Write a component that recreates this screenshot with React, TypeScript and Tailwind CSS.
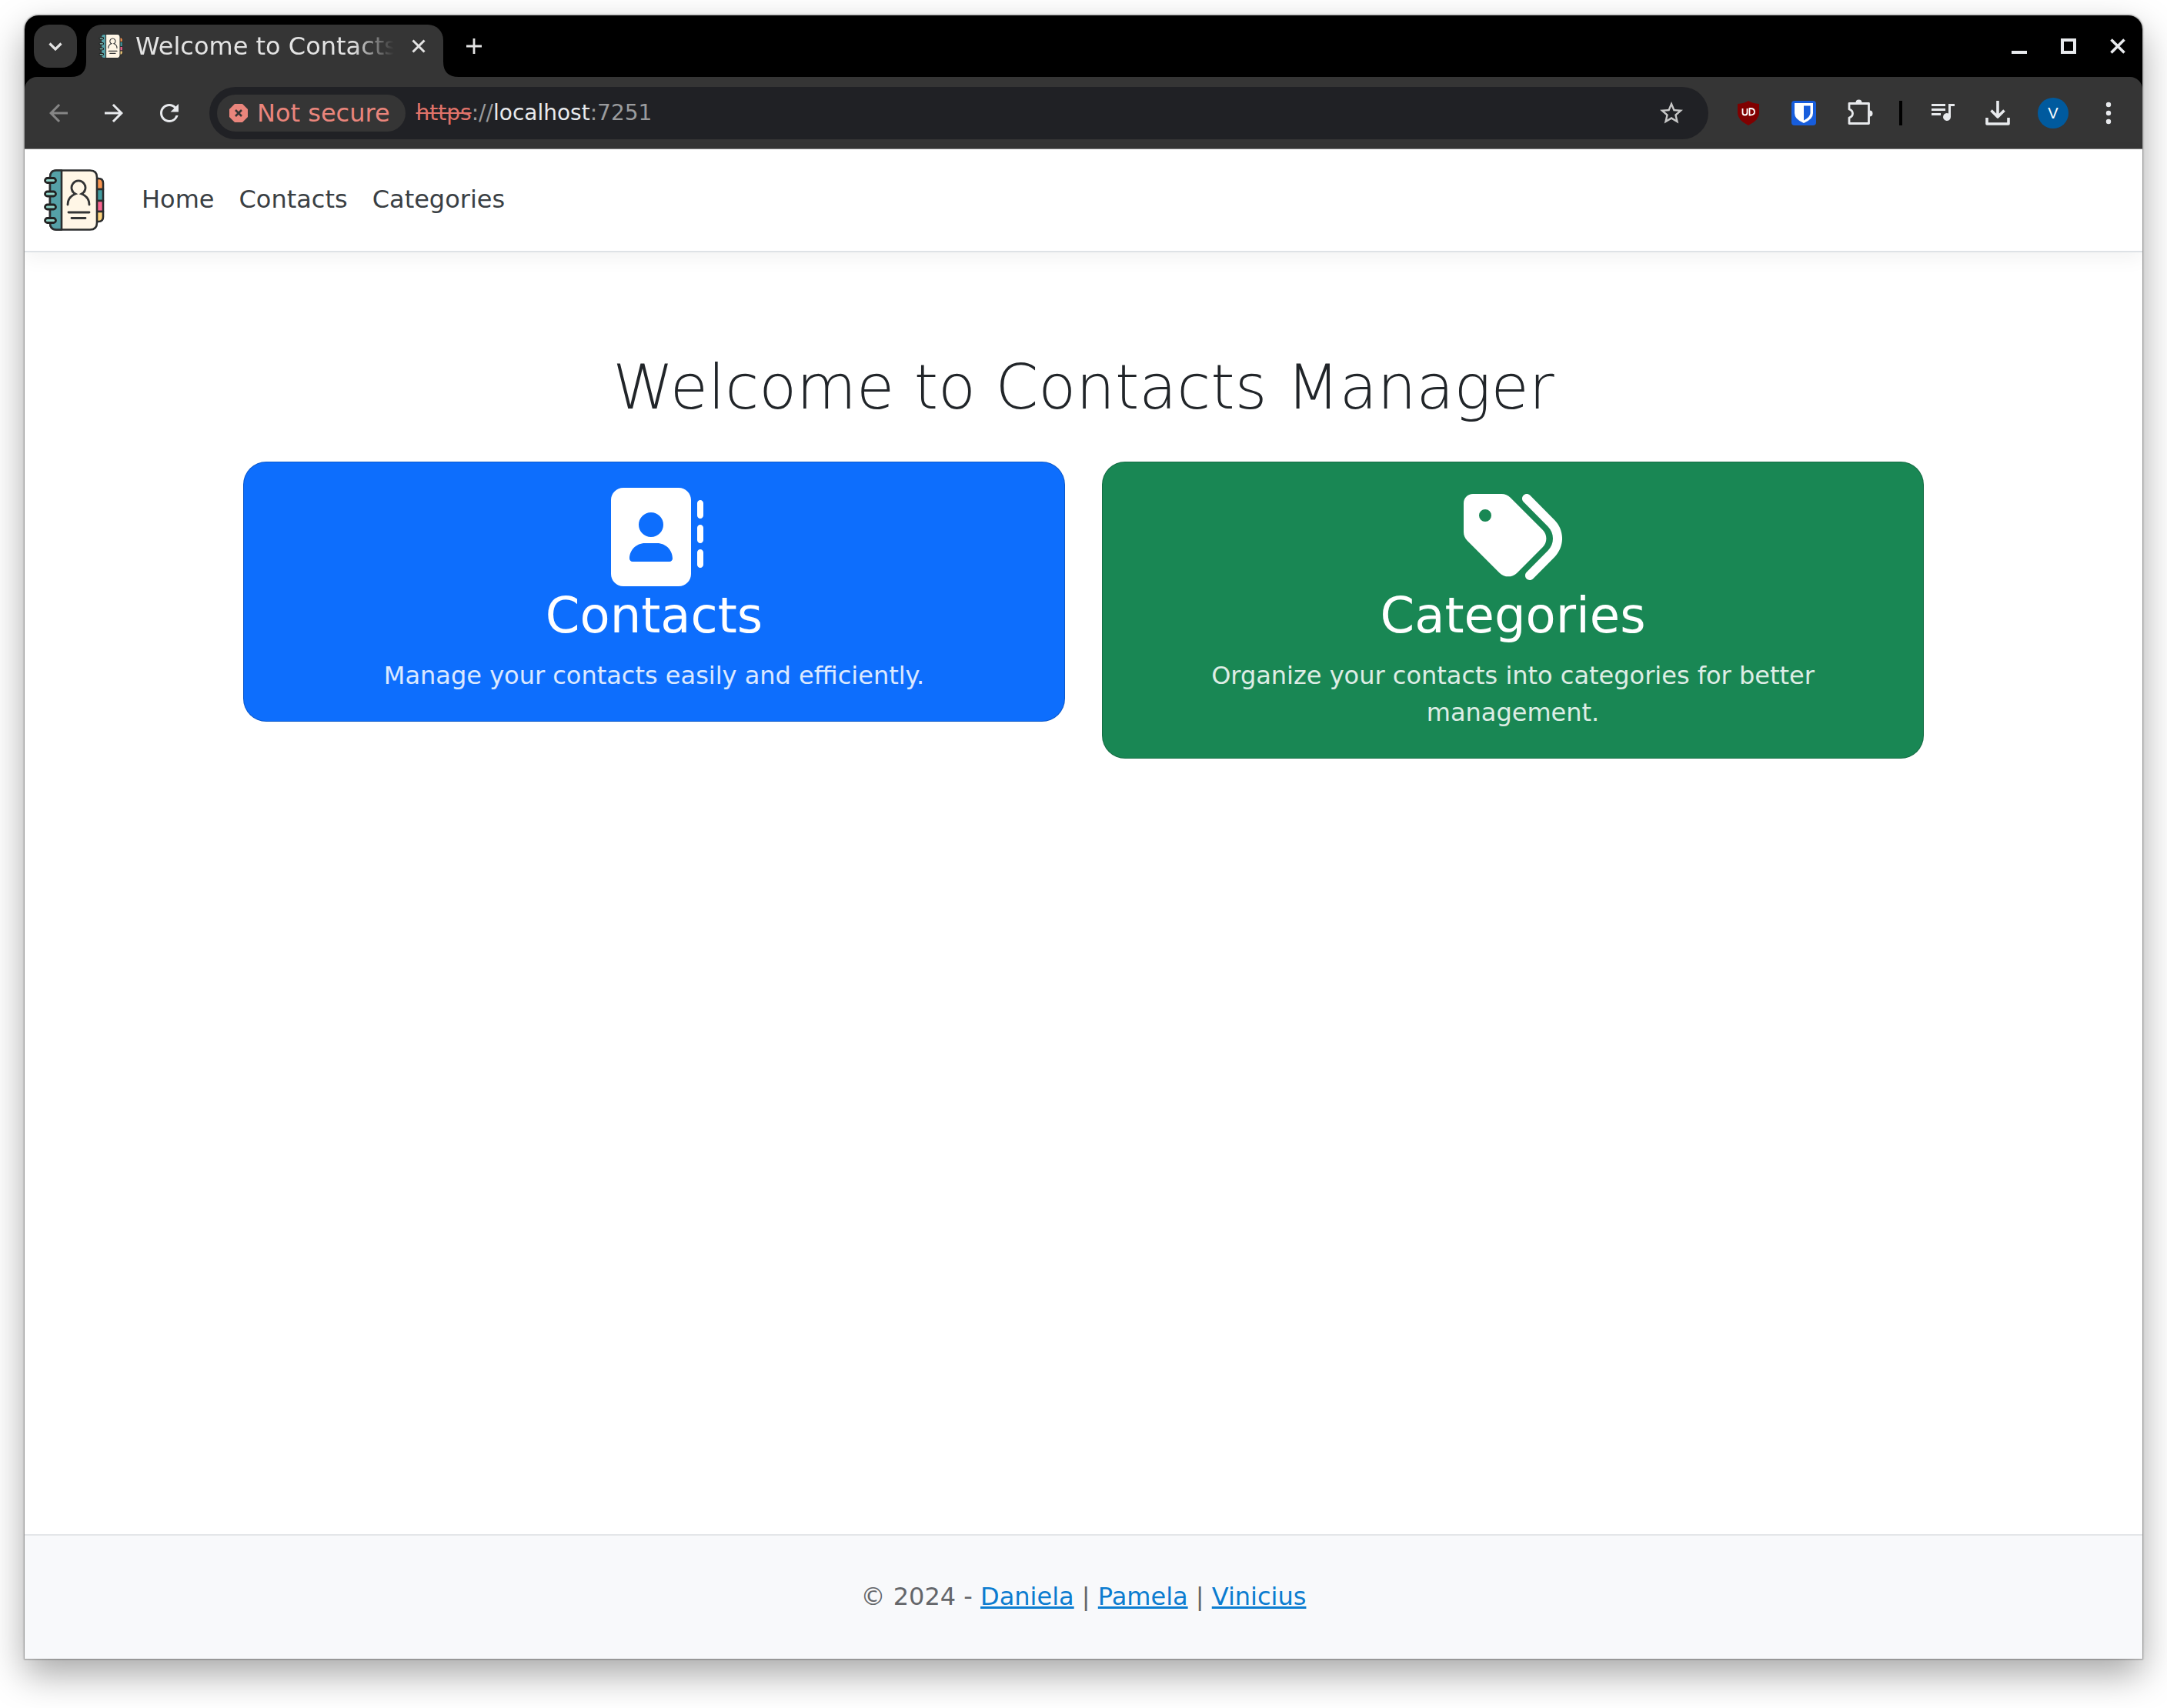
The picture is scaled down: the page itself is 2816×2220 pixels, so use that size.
import type { ReactNode } from "react";
import { FaAddressBook, FaTags } from "react-icons/fa6";
import { MdArrowBack, MdArrowForward, MdRefresh, MdStarBorder } from "react-icons/md";

function NotebookIcon({ className }: { className: string }) {
  return (
    <svg viewBox="-1 0 80 80" className={className} fill="none" aria-hidden="true">
      <g stroke="#2b2d2e" strokeWidth="2.6" strokeLinejoin="round">
        <path d="M66 12h5q6 0 6 6v8H66z" fill="#fc9650" />
        <path d="M66 26h11v15H66z" fill="#429c9f" />
        <path d="M66 41h11v14H66z" fill="#fb6491" />
        <path d="M66 55h11v7q0 6-6 6h-5z" fill="#fdd27c" />
        <path d="M16 1.5h44q9 0 9 9v59q0 9-9 9H16q-8 0-8-9v-59q0-9 8-9z" fill="#fff6e6" />
        <path d="M23 1.5h-7q-8 0-8 9v59q0 9 8 9h7z" fill="#55a1a7" />
      </g>
      <g fill="#8fd6ca" stroke="#222" strokeWidth="2.8">
        <rect x="1.5" y="11.5" width="14" height="6" rx="3" />
        <rect x="1.5" y="29" width="14" height="6" rx="3" />
        <rect x="1.5" y="46" width="14" height="6" rx="3" />
        <rect x="1.5" y="63.5" width="14" height="6" rx="3" />
      </g>
      <g stroke="#333435" strokeWidth="2.8" strokeLinecap="round">
        <path d="M31 46q0-10 10-14a9 9 0 1 1 8 0q10 4 10 14" />
        <path d="M32 56h27M36 63.500h18" />
      </g>
    </svg>
  );
}

function ToolButton({ label, children }: { label: string; children: ReactNode }) {
  return (
    <button type="button" aria-label={label} className="flex h-16 w-[72px] shrink-0 items-center justify-center">
      {children}
    </button>
  );
}

function TabStrip() {
  return (
    <div className="flex h-20 items-end bg-black pl-3 text-[#e3e3e3]">
      <button type="button" aria-label="Search tabs" className="mb-3 flex size-14 items-center justify-center rounded-[20px] bg-[#353535]">
        <svg viewBox="0 0 20 20" className="size-5" fill="none" stroke="currentColor" strokeWidth="3.200" aria-hidden="true">
          <path d="M2.500 6.500 10 14l7.500-7.500" />
        </svg>
      </button>
      <div className="relative ml-3 flex h-[68px] w-[464px] items-center rounded-t-[20px] bg-[#353535] pr-3 pb-3 pl-4">
        <svg viewBox="0 0 20 20" className="absolute bottom-0 -left-5 size-5" aria-hidden="true">
          <path d="M20 0v20H0Q20 20 20 0z" fill="#353535" />
        </svg>
        <svg viewBox="0 0 20 20" className="absolute -right-5 bottom-0 size-5" aria-hidden="true">
          <path d="M0 0v20h20Q0 20 0 0z" fill="#353535" />
        </svg>
        <NotebookIcon className="size-8 shrink-0" />
        <span className="ml-4 w-[336px] overflow-hidden text-[32px] leading-10 whitespace-nowrap [mask-image:linear-gradient(to_right,black_84%,transparent)]">
          Welcome to Contacts
        </span>
        <button type="button" aria-label="Close tab" className="ml-3 flex size-10 items-center justify-center">
          <svg viewBox="0 0 20 20" className="size-5" stroke="currentColor" strokeWidth="3" aria-hidden="true">
            <path d="M2.500 2.500l15 15M17.500 2.500l-15 15" />
          </svg>
        </button>
      </div>
      <button type="button" aria-label="New tab" className="mb-3 ml-3 flex size-14 items-center justify-center">
        <svg viewBox="0 0 20 20" className="size-5" stroke="currentColor" strokeWidth="2.800" aria-hidden="true">
          <path d="M10 0v20M0 10h20" />
        </svg>
      </button>
      <div className="mb-3 ml-auto flex h-14 items-center text-[#e8eaed]">
        <button type="button" aria-label="Minimize" className="flex size-16 items-center justify-center">
          <svg viewBox="0 0 20 20" className="size-5" aria-hidden="true">
            <path d="M0 16h20v4H0z" fill="currentColor" />
          </svg>
        </button>
        <button type="button" aria-label="Maximize" className="flex size-16 items-center justify-center">
          <svg viewBox="0 0 20 20" className="size-5" fill="none" stroke="currentColor" strokeWidth="4" aria-hidden="true">
            <path d="M2 2h16v16H2z" />
          </svg>
        </button>
        <button type="button" aria-label="Close" className="flex size-16 items-center justify-center">
          <svg viewBox="0 0 20 20" className="size-5" stroke="currentColor" strokeWidth="3.600" aria-hidden="true">
            <path d="M1.500 1.500l17 17M18.500 1.500l-17 17" />
          </svg>
        </button>
      </div>
    </div>
  );
}

function Toolbar() {
  return (
    <div className="bg-black">
      <div className="flex h-[94px] items-center rounded-t-[16px] border-b border-[#7d7d7d] bg-[#353535] px-2 text-[#e8eaed]">
        <ToolButton label="Back">
          <MdArrowBack className="size-9 text-[#868686]" />
        </ToolButton>
        <ToolButton label="Forward">
          <MdArrowForward className="size-9" />
        </ToolButton>
        <ToolButton label="Reload">
          <MdRefresh className="size-9" />
        </ToolButton>
        <div className="ml-4 flex h-[68px] flex-1 items-center rounded-full bg-[#202125] pr-[30px] pl-[10px]">
          <button type="button" className="flex h-12 items-center gap-3 rounded-full bg-[#353535] pr-5 pl-4 text-[32px] leading-10 text-[#ea857c]">
            <svg viewBox="0 0 24 24" className="size-6" aria-hidden="true">
              <path d="M7 0h10l7 7v10l-7 7H7l-7-7V7z" fill="currentColor" />
              <path d="M8 8l8 8M16 8l-8 8" stroke="#353535" strokeWidth="2.600" />
            </svg>
            Not secure
          </button>
          <div className="ml-[14px] flex-1 text-[28px] leading-10 text-[#9a9b9d]">
            <span className="text-[#e0736a] line-through">https</span>://<span className="text-[#e8eaed]">localhost</span>:7251
          </div>
          <button type="button" aria-label="Bookmark this page">
            <MdStarBorder className="size-9 text-[#c7c7c7]" />
          </button>
        </div>
        <div className="ml-4 flex items-center">
          <ToolButton label="uBlock Origin">
            <svg viewBox="0 0 28 32" className="h-8 w-7" aria-hidden="true">
              <path d="M14 0q5 3.500 14 4v12q0 9-14 16Q0 25 0 16V4q9-.5 14-4z" fill="#800000" />
              <path d="M6.500 10v5.500q0 3 3 3t3-3V10M15.500 18.500V10h1q5.500 0 5.500 4.250t-5.500 4.250z" fill="none" stroke="#fff" strokeWidth="1.800" />
            </svg>
          </ToolButton>
          <ToolButton label="Bitwarden">
            <svg viewBox="0 0 32 32" className="size-8" aria-hidden="true">
              <rect width="32" height="32" rx="4" fill="#175ddc" />
              <path d="M4 3h24v13q0 8-12 13Q4 24 4 16z" fill="#fff" />
              <path d="M16 6.500h8.500V16q0 5-8.500 9.500z" fill="#175ddc" />
            </svg>
          </ToolButton>
          <ToolButton label="Extensions">
            <svg viewBox="0 0 36 36" className="size-9" aria-hidden="true">
              <path d="M5 5.500h25.500v26H5v-7.500q4.500-1.500 4.500-5.500T5 13z" fill="none" stroke="currentColor" strokeWidth="2.800" strokeLinejoin="round" />
              <path d="M13.500 4.500a4 4 0 0 1 8 0zM31.500 14.500a4 4 0 0 1 0 8z" fill="currentColor" />
            </svg>
          </ToolButton>
          <span className="mx-4 h-8 w-1 bg-black" />
          <ToolButton label="Media controls">
            <svg viewBox="0 0 32 24" className="h-6 w-8" fill="currentColor" aria-hidden="true">
              <path d="M2 0h18v3H2zM2 6h18v3H2zM2 12h12v3H2z" />
              <path d="M24 0h8v3h-5v14a5 5 0 1 1-3-4.500z" />
            </svg>
          </ToolButton>
          <ToolButton label="Downloads">
            <svg viewBox="0 0 32 32" className="size-8" fill="none" stroke="currentColor" strokeWidth="3.600" strokeLinejoin="round" aria-hidden="true">
              <path d="M16 0v21M7.500 12.500l8.500 8.500 8.500-8.500M2 22v8h28v-8" />
            </svg>
          </ToolButton>
          <ToolButton label="Profile">
            <span className="flex size-10 items-center justify-center rounded-full bg-[#005a9e] font-['Liberation_Sans'] text-[20px] text-white">V</span>
          </ToolButton>
          <ToolButton label="Menu">
            <svg viewBox="0 0 8 30" className="h-8 w-2" fill="currentColor" aria-hidden="true">
              <circle cx="4" cy="4" r="3.200" />
              <circle cx="4" cy="15" r="3.200" />
              <circle cx="4" cy="26" r="3.200" />
            </svg>
          </ToolButton>
        </div>
      </div>
    </div>
  );
}

function FeatureCard({ title, text, icon, className }: { title: string; text: string; icon: ReactNode; className: string }) {
  return (
    <a href="#" className={`flex flex-1 flex-col items-center rounded-[30px] border border-black/20 px-16 pt-[33px] pb-[35px] text-center text-white ${className}`}>
      {icon}
      <h2 className="mb-4 text-[64px] leading-[76px]">{title}</h2>
      <p className="max-w-[900px] text-[32px] leading-[48px] text-white/85">{text}</p>
    </a>
  );
}

export default function App() {
  return (
    <div className="flex min-h-screen bg-white px-8 pt-5 pb-16 font-['DejaVu_Sans',sans-serif]">
      <div className="flex flex-1 flex-col overflow-hidden rounded-t-[18px] bg-white shadow-[0_0_2px_1px_rgba(0,0,0,0.35),0_20px_48px_rgba(0,0,0,0.35)]">
        <TabStrip />
        <Toolbar />
        <header className="border-b-2 border-[#dee2e6] bg-white shadow-[0_8px_24px_rgba(0,0,0,0.05)]">
          <nav className="flex h-[132px] items-center gap-12 px-6 text-[32px] leading-[48px] text-[#3a3f44]">
            <a href="#" aria-label="Contacts Manager">
              <NotebookIcon className="size-20" />
            </a>
            <div className="flex gap-8 pb-[2px]">
              <a href="#">Home</a>
              <a href="#">Contacts</a>
              <a href="#">Categories</a>
            </div>
          </nav>
        </header>
        <main className="flex-1 px-12 pt-32 text-[#212529]">
          <h1 className="mb-12 text-center text-[80px] leading-[96px] font-extralight">Welcome to Contacts Manager</h1>
          <div className="mx-auto flex max-w-[2184px] items-start gap-12">
            <FeatureCard
              title="Contacts"
              text="Manage your contacts easily and efficiently."
              icon={<FaAddressBook className="size-32" />}
              className="bg-[#0d6efd]"
            />
            <FeatureCard
              title="Categories"
              text="Organize your contacts into categories for better management."
              icon={<FaTags className="size-32" />}
              className="bg-[#198754]"
            />
          </div>
        </main>
        <footer className="border-t-2 border-[#e4e6e9] bg-[#f8f9fb] pt-[55px] pb-[57px] text-center text-[32px] leading-[48px] text-[#64666a]">
          © 2024 -{" "}
          <a href="#" className="text-[#0b7cd0] underline">Daniela</a> |{" "}
          <a href="#" className="text-[#0b7cd0] underline">Pamela</a> |{" "}
          <a href="#" className="text-[#0b7cd0] underline">Vinicius</a>
        </footer>
      </div>
    </div>
  );
}
